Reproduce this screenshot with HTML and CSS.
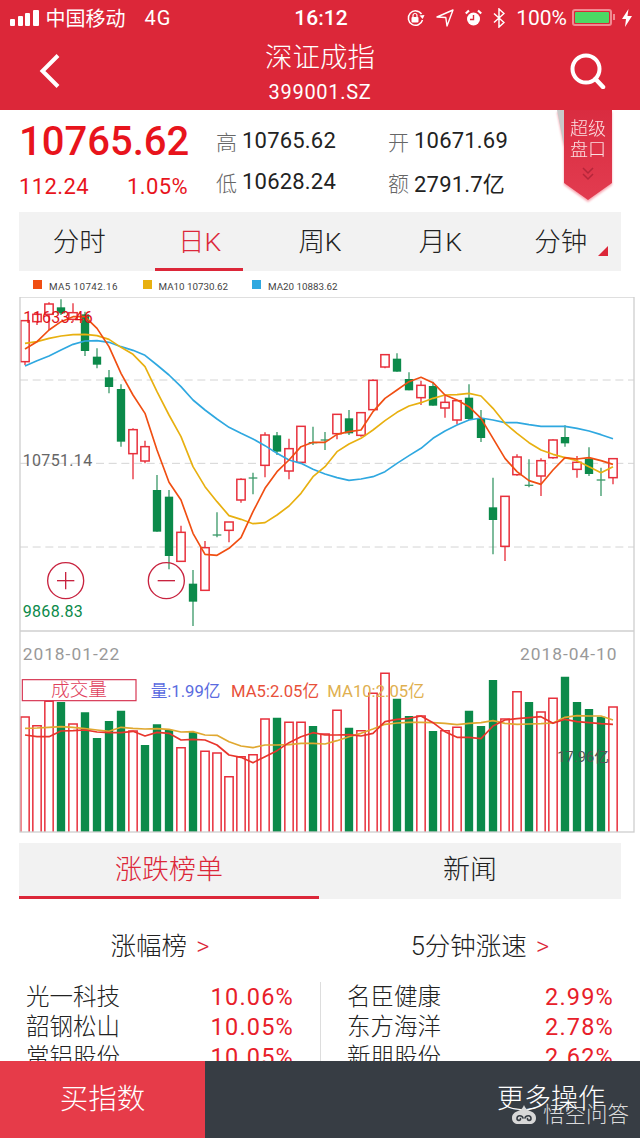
FILE: index.html
```html
<!DOCTYPE html>
<html lang="zh-CN">
<head>
<title>深证成指</title>
<meta charset="utf-8">
<link rel="stylesheet" href="styles.css">
</head>
<body>

<header class="top">
	<div class="status">
		<div class="status-left">
			<span class="signal"><i></i><i></i><i></i><i></i></span>
			<span class="carrier">中国移动</span>
			<span class="net">4G</span>
		</div>
		<div class="clock">16:12</div>
		<div class="status-right">
			<svg class="st-icon" width="19" height="18" viewBox="0 0 19 18"><path d="M15.500 5a7.200 7.200 0 1 0 1 6" fill="none" stroke="#fff" stroke-width="1.500"/><path d="M13.500 6.500l5-.5-1.800 4z" fill="#fff"/><rect x="5.500" y="8" width="7" height="5.500" rx="1" fill="#fff"/><path d="M7 8V6.500a2 2 0 0 1 4 0V8" fill="none" stroke="#fff" stroke-width="1.200"/></svg>
			<svg class="st-icon" width="18" height="18" viewBox="0 0 18 18"><path d="M1 8L17 1l-6 16-1.200-8.500z" fill="none" stroke="#fff" stroke-width="1.400" stroke-linejoin="round"/></svg>
			<svg class="st-icon" width="17" height="18" viewBox="0 0 17 18"><circle cx="8.500" cy="10" r="6.500" fill="#fff"/><path d="M8.500 6v4.500H5" fill="none" stroke="#dc2739" stroke-width="1.400"/><path d="M.8 4.500L4 1.500M16.200 4.500L13 1.500" stroke="#fff" stroke-width="2.200"/></svg>
			<svg class="st-icon" width="12" height="20" viewBox="0 0 12 20"><path d="M1 5.500l10 9-5 4.500V1l5 4.500-10 9" fill="none" stroke="#fff" stroke-width="1.500"/></svg>
			<span class="pct">100%</span>
			<span class="battery"><b></b></span>
			<svg class="bolt" width="10" height="18" viewBox="0 0 10 18"><path d="M6.500 0L0 10h4l-1 8 7-11H5.500z" fill="#fff"/></svg>
		</div>
	</div>
	<nav class="nav">
		<svg width="22" height="36" viewBox="0 0 22 36"><path d="M19 2.500L3.500 18 19 33.500" fill="none" stroke="#fff" stroke-width="4"/></svg>
		<div class="title">
			<div class="title-name">深证成指</div>
			<div class="title-code">399001.SZ</div>
		</div>
		<svg class="nav-search" width="36" height="36" viewBox="0 0 36 36"><circle cx="16" cy="16" r="13.500" fill="none" stroke="#fff" stroke-width="4"/><path d="M25.500 26l7.500 8" stroke="#fff" stroke-width="4.500" stroke-linecap="round"/></svg>
	</nav>
</header>

<section class="quote">
	<div class="price">
		<div class="price-now">10765.62</div>
		<div class="price-change"><span>112.24</span><span>1.05%</span></div>
	</div>
	<div class="stats">
		<div class="stat"><span class="stat-key">高</span>10765.62</div>
		<div class="stat"><span class="stat-key">开</span>10671.69</div>
		<div class="stat"><span class="stat-key">低</span>10628.24</div>
		<div class="stat"><span class="stat-key">额</span>2791.7亿</div>
	</div>
	<div class="badge-wrap">
		<div class="badge">
			<div class="badge-text">超级<br>盘口</div>
			<svg width="14" height="14" viewBox="0 0 14 14"><path d="M2 1l5 5 5-5M2 7l5 5 5-5" fill="none" stroke="#b5263a" stroke-width="1.500"/></svg>
		</div>
	</div>
</section>

<ul class="periods">
	<li>分时</li>
	<li class="on">日K</li>
	<li>周K</li>
	<li>月K</li>
	<li class="has-menu">分钟</li>
</ul>

<div class="legend">
	<span class="legend-item"><i class="sw-ma5"></i><span class="legend-short">MA5 10742.16</span></span>
	<span class="legend-item"><i class="sw-ma10"></i>MA10 10730.62</span>
	<span class="legend-item"><i class="sw-ma20"></i>MA20 10883.62</span>
</div>

<svg id="chart" class="chart" viewBox="0 81 1920 1629"></svg>

<ul class="tabs">
	<li class="on">涨跌榜单</li>
	<li>新闻</li>
</ul>

<main class="boards">
	<section class="board">
		<h3>涨幅榜 <span>&gt;</span></h3>
		<div class="row"><span>光一科技</span><em>10.06%</em></div>
		<div class="row"><span>韶钢松山</span><em>10.05%</em></div>
		<div class="row"><span>常铝股份</span><em>10.05%</em></div>
	</section>
	<section class="board">
		<h3>5分钟涨速 <span>&gt;</span></h3>
		<div class="row"><span>名臣健康</span><em>2.99%</em></div>
		<div class="row"><span>东方海洋</span><em>2.78%</em></div>
		<div class="row"><span>新朋股份</span><em>2.62%</em></div>
	</section>
</main>

<footer class="bottom">
	<div class="buy">买指数</div>
	<div class="more">更多操作</div>
</footer>

<div class="mark">
	<svg width="26" height="22" viewBox="0 0 26 22"><path d="M13 1c1 3 3 5 6 6 3 1 6 3 6 7 0 4-3 6-6 6H7c-3 0-6-2-6-6 0-4 3-6 6-7 3-1 5-3 6-6z" fill="#d8d8d8"/><path d="M12 14c-1-3-6-3-6 .5 0 2.500 4 2.500 3.500 0M14 14c1-3 6-3 6 .5 0 2.500-4 2.500-3.500 0" fill="none" stroke="#373d44" stroke-width="1.600" stroke-linecap="round"/></svg>
	<span>悟空问答</span>
</div>

<script src="chart.js"></script>
</body>
</html>
```

FILE: styles.css
```css
html, body {
	margin: 0;
	padding: 0;
}

body {
	position: relative;
	display: flex;
	flex-direction: column;
	width: 640px;
	height: 1138px;
	overflow: hidden;
	background: #fff;
	color: #222;
	font-family: Roboto, "Noto Sans CJK SC", sans-serif;
}

ul, li {
	margin: 0;
	padding: 0;
	list-style-type: none;
}

/* red top bar */
.top {
	flex: none;
	height: 110px;
	background: #dc2739;
	color: #fff;
}

.status {
	display: flex;
	align-items: center;
	justify-content: space-between;
	height: 35px;
	padding: 0 8px 0 10px;
	font-size: 20px;
}

.status-left, .status-right {
	display: flex;
	align-items: center;
	width: 226px;
}

.status-right {
	justify-content: flex-end;
}

.signal {
	display: flex;
	align-items: flex-end;
	gap: 2.500px;
	height: 16px;
	margin-right: 7px;
}

.signal i {
	width: 5px;
	background: #fff;
	border-radius: 1px;
}

.signal i:nth-child(1) { height: 7px; }
.signal i:nth-child(2) { height: 10px; }
.signal i:nth-child(3) { height: 13px; }
.signal i:nth-child(4) { height: 16px; width: 6px; }

.carrier {
	margin-right: 19px;
}

.net {
	font-size: 20px;
	letter-spacing: 1px;
}

.clock {
	font-weight: 500;
	font-size: 21px;
}

.st-icon {
	margin-right: 11px;
}

.pct {
	margin-right: 5px;
	font-size: 21px;
}

.battery {
	position: relative;
	display: block;
	box-sizing: border-box;
	width: 40px;
	height: 17px;
	padding: 1px;
	border: 2px solid #f08a92;
	border-radius: 3px;
	margin-right: 10px;
}

.battery b {
	display: block;
	height: 100%;
	background: #4cd964;
	border-radius: 1px;
}

.battery:after {
	content: '';
	position: absolute;
	top: 3px;
	right: -5px;
	width: 2px;
	height: 6px;
	background: #f08a92;
}

.nav {
	position: relative;
	display: flex;
	align-items: center;
	justify-content: center;
	height: 75px;
}

.nav svg {
	position: absolute;
	top: 18px;
	left: 39px;
}

.nav svg.nav-search {
	left: 570px;
}

.title {
	text-align: center;
}

.title-name {
	font-size: 27.500px;
	font-weight: 300;
	line-height: 40px;
	margin-top: -1px;
}

.title-code {
	font-size: 20px;
	line-height: 28px;
	letter-spacing: 0.7px;
}

/* price block */
.quote {
	flex: none;
	display: flex;
	height: 102px;
}

.price {
	width: 197px;
	margin-left: 19px;
	color: #e8141c;
}

.price-now {
	font-size: 40px;
	font-weight: 500;
	line-height: 63px;
}

.price-change {
	display: flex;
	justify-content: space-between;
	width: 169px;
	font-size: 22px;
	line-height: 27px;
	letter-spacing: 0.4px;
}

.stats {
	display: grid;
	grid-template-columns: 172px 170px;
	grid-auto-rows: 41px;
	width: 342px;
	padding-top: 10px;
}

.stat {
	display: flex;
	align-items: center;
	font-size: 22px;
	letter-spacing: 0.2px;
	color: #222;
}

.stat-key {
	width: 26px;
	font-size: 21px;
	font-weight: 300;
	color: #666;
}

.badge-wrap {
	position: relative;
	width: 48px;
	margin-left: 6px;
	filter: drop-shadow(0 2px 1px #f7a6b0);
}

.badge-wrap:before {
	content: '';
	position: absolute;
	top: 0;
	left: -7px;
	border-top: 36px solid #c9c9c9;
	border-left: 7px solid transparent;
}

.badge {
	display: flex;
	flex-direction: column;
	align-items: center;
	width: 48px;
	height: 90px;
	background: linear-gradient(#d92c40, #e23c50);
	clip-path: polygon(0 0, 100% 0, 100% 81%, 50% 100%, 0 81%);
	color: #fbe0e2;
}

.badge-text {
	font-size: 18px;
	font-weight: 300;
	line-height: 21px;
	margin-top: 8px;
	margin-bottom: 7px;
}

/* period tabs */
.periods {
	flex: none;
	display: grid;
	grid-template-columns: repeat(5, 1fr);
	width: 602px;
	height: 59px;
	margin-left: 19px;
	background: #f2f2f2;
}

.periods li {
	position: relative;
	font-size: 26.500px;
	font-weight: 300;
	line-height: 59px;
	text-align: center;
	color: #222;
}

.periods li.on {
	color: #dc2739;
}

.periods li.on:after {
	content: '';
	position: absolute;
	left: 16px;
	right: 17px;
	bottom: 0;
	height: 3px;
	background: #dc2739;
}

.periods li.has-menu:after {
	content: '';
	position: absolute;
	right: 13px;
	bottom: 15px;
	border-bottom: 10px solid #dc2739;
	border-left: 10px solid transparent;
}

/* chart */
.legend {
	flex: none;
	display: flex;
	height: 26px;
	padding-left: 33px;
	font-size: 9.800px;
	color: #444;
}

.legend-item {
	display: flex;
	align-items: center;
	width: 109.500px;
	height: 31px;
}

.legend-short {
	letter-spacing: 0.4px;
}

.legend-item i {
	width: 9px;
	height: 9px;
	margin-right: 7px;
	margin-top: -4px;
}

.sw-ma5 { background: #f04e12; }
.sw-ma10 { background: #e8b010; }
.sw-ma20 { background: #2fa8e0; }

.chart {
	flex: none;
	display: block;
	width: 640px;
	height: 543px;
}

.frame { fill: none; stroke: #cfcfcf; stroke-width: 4; }
.dash { stroke: #d4d4d4; stroke-width: 3; stroke-dasharray: 24 14; }
.up-body { fill: #fff; stroke: #e8303c; stroke-width: 4.500; }
.up-wick { stroke: #e8303c; stroke-width: 4; }
.down-body { fill: #0b8a4a; }
.down-wick { stroke: #3d9a6a; stroke-width: 4; }
.line { fill: none; stroke-width: 5; stroke-linejoin: round; }
.vol { fill: none; stroke-width: 5; stroke-linejoin: round; }
.ma5 { stroke: #f04e12; }
.ma10 { stroke: #e8b010; }
.ma20 { stroke: #2fa8e0; }
.vma5 { stroke: #e8352c; }
.vma10 { stroke: #e0a830; }
.btn { fill: none; stroke: #c8233f; stroke-width: 4; }
.label { font-size: 48px; letter-spacing: 1px; }
.hi { fill: #e0141c; }
.mid { fill: #666; }
.lo { fill: #0b8a4a; }
.date { font-size: 52px; fill: #999; letter-spacing: 3px; }
.vol-box { fill: #fff; stroke: #d63350; stroke-width: 3.500; }
.vol-title { font-size: 56px; font-weight: 300; fill: #e0405c; text-anchor: middle; }
.vol-text { font-size: 50px; }
.t-vol { fill: #5a6be0; }
.t-ma5 { fill: #e8503a; }
.t-ma10 { fill: #e0b050; }
.t-last { fill: #555; font-size: 44px; }

/* lower tabs */
.tabs {
	flex: none;
	display: grid;
	grid-template-columns: 300px 302px;
	width: 602px;
	height: 56px;
	margin-left: 19px;
	margin-top: 3px;
	background: #f2f2f2;
}

.tabs li {
	font-size: 27px;
	font-weight: 300;
	line-height: 55px;
	text-align: center;
	color: #222;
}

.tabs li.on {
	box-sizing: border-box;
	height: 56px;
	color: #dc2739;
	border-bottom: 3px solid #dc2739;
}

.boards {
	flex: 1;
	display: grid;
	grid-template-columns: 320px 320px;
	overflow: hidden;
}

.board h3 {
	margin: 0 0 18px;
	padding-top: 29px;
	font-weight: 300;
	font-size: 25.500px;
	line-height: 36px;
	text-align: center;
	color: #222;
}

.board h3 span {
	color: #dc2739;
	margin-left: 3px;
}

.row {
	display: flex;
	justify-content: space-between;
	height: 30px;
	padding: 0 26px;
	font-size: 23.500px;
	font-weight: 300;
	line-height: 30px;
	color: #222;
}

.board + .board .row {
	padding-right: 26px;
	border-left: 1px solid #ddd;
}

.row em {
	font-style: normal;
	font-weight: 400;
	color: #e8202a;
	letter-spacing: 1.200px;
}

/* bottom buttons */
.bottom {
	flex: none;
	display: flex;
	height: 77px;
	font-size: 28.500px;
	font-weight: 300;
	line-height: 77px;
	color: #fff;
}

.buy {
	width: 205px;
	text-align: center;
	background: #e63b49;
}

.more {
	flex: 1;
	padding-right: 35px;
	text-align: right;
	background: #373d44;
	font-size: 27px;
}

/* watermark over the corner */
.mark {
	position: absolute;
	right: 11px;
	bottom: 10px;
	display: flex;
	align-items: center;
	gap: 6px;
	font-size: 21.500px;
	font-weight: 300;
	line-height: 26px;
	color: rgba(235, 235, 235, 0.92);
}
```

FILE: chart.js
```js
// all chart numbers are in viewBox units, three per screen pixel
var NS = 'http://www.w3.org/2000/svg';
var svg = document.getElementById('chart');

// [up?, high, top, bottom, low], a doji has top == bottom
var candles = [
	[1, 152, 152, 275, 285], [1, 125, 133, 155, 165], [1, 97, 102, 133, 180], [0, 88, 112, 130, 135],
	[1, 100, 128, 148, 155], [0, 125, 133, 243, 258], [0, 235, 260, 284, 295], [0, 300, 322, 351, 370],
	[0, 343, 357, 515, 530], [1, 475, 479, 551, 628], [1, 512, 530, 573, 580], [0, 615, 660, 785, 785],
	[0, 660, 680, 858, 898], [1, 767, 787, 874, 874], [0, 900, 941, 995, 1068], [1, 813, 833, 961, 961],
	[0, 727, 795, 795, 802], [1, 756, 756, 781, 817], [1, 625, 628, 690, 698], [0, 608, 624, 624, 673],
	[1, 487, 495, 586, 622], [0, 486, 496, 545, 555], [1, 506, 536, 603, 628], [1, 469, 469, 577, 577],
	[0, 470, 518, 518, 525], [0, 486, 510, 510, 540], [1, 433, 433, 491, 508], [0, 420, 445, 490, 495],
	[1, 428, 428, 496, 500], [1, 328, 331, 419, 419], [1, 254, 254, 291, 295], [0, 250, 266, 305, 305],
	[0, 307, 327, 361, 361], [1, 332, 346, 383, 405], [0, 335, 348, 407, 407], [1, 378, 397, 414, 443],
	[1, 392, 392, 450, 463], [0, 343, 383, 447, 450], [0, 420, 445, 504, 516], [0, 623, 712, 750, 853],
	[1, 679, 679, 829, 873], [1, 553, 561, 614, 617], [0, 568, 646, 646, 652], [1, 565, 572, 618, 678],
	[1, 508, 510, 563, 566], [0, 466, 501, 520, 530], [1, 558, 577, 598, 623], [0, 532, 566, 612, 618],
	[0, 593, 630, 630, 678], [1, 566, 566, 623, 643]
];

var ma5 = [237, 215, 180, 155, 140, 140, 175, 230, 310, 375, 430, 540, 637, 690, 790, 853, 856, 835, 803, 725, 655, 605, 570, 530, 517, 517,
	493, 485, 480, 425, 385, 360, 335, 322, 338, 375, 390, 410, 445, 505, 565, 605, 632, 643, 600, 563, 567, 563, 572, 583];
var ma10 = [220, 215, 205, 198, 194, 193, 197, 208, 232, 253, 290, 365, 435, 500, 590, 650, 695, 737, 748, 761, 758, 735, 708, 670, 620, 590,
	545, 522, 505, 480, 452, 427, 408, 398, 385, 375, 374, 370, 378, 415, 460, 490, 518, 540, 553, 563, 572, 590, 608, 590];
var ma20 = [288, 272, 258, 240, 223, 213, 212, 217, 230, 241, 256, 285, 315, 350, 390, 420, 447, 472, 490, 507, 527, 550, 570, 580, 598, 612,
	623, 631, 627, 620, 605, 580, 557, 535, 505, 483, 465, 450, 444, 450, 458, 458, 464, 469, 469, 469, 475, 483, 494, 506];

// volume bars: [up?, top]
var bars = [
	[1, 261], [1, 287], [1, 214], [0, 216], [1, 282], [0, 247], [0, 324], [0, 273], [0, 242], [1, 303],
	[0, 345], [0, 283], [0, 300], [1, 353], [0, 306], [1, 364], [1, 369], [1, 440], [1, 380], [1, 374],
	[1, 267], [0, 263], [1, 277], [1, 277], [0, 288], [1, 312], [1, 241], [0, 293], [1, 302], [1, 190],
	[1, 130], [0, 206], [0, 258], [1, 258], [0, 303], [1, 302], [1, 292], [0, 242], [0, 288], [0, 150],
	[1, 267], [1, 185], [0, 216], [1, 246], [1, 205], [0, 140], [0, 216], [0, 237], [0, 260], [1, 231]
];

var vma5 = [315, 320, 320, 303, 302, 300, 306, 308, 308, 304, 318, 307, 310, 330, 328, 330, 345, 375, 382, 398, 380, 362, 338, 320, 308, 315,
	315, 314, 318, 310, 275, 268, 265, 258, 278, 305, 322, 322, 326, 288, 270, 266, 263, 260, 280, 268, 275, 278, 281, 283];
var vma10 = [295, 294, 292, 290, 292, 296, 300, 304, 292, 295, 297, 296, 298, 306, 305, 315, 316, 335, 348, 353, 345, 345, 344, 340, 340, 342,
	332, 320, 310, 297, 283, 279, 277, 277, 278, 280, 284, 280, 278, 272, 280, 283, 282, 281, 279, 262, 257, 258, 258, 270];

function el(tag, attrs, text) {
	var node = document.createElementNS(NS, tag);
	for (var key in attrs) {
		node.setAttribute(key, attrs[key]);
	}
	if (text) node.textContent = text;
	svg.appendChild(node);
	return node;
}

function xOf(i) {
	return 75 + i * 36;
}

function polyline(values, offset, cls) {
	var pts = [];
	for (var i = 0; i < values.length; i += 1) {
		pts.push(xOf(i) + ',' + (values[i] + offset));
	}
	el('polyline', { points: pts.join(' '), 'class': cls });
}

var VOL = 1080; // volume panel starts this far below the candle panel
var BOTTOM = VOL + 606;
var i = 0;

el('line', { x1: 60, x2: 1902, y1: 330, y2: 330, 'class': 'dash' });
el('line', { x1: 60, x2: 1902, y1: 580, y2: 580, 'class': 'dash' });
el('line', { x1: 60, x2: 1902, y1: 831, y2: 831, 'class': 'dash' });

for (i = 0; i < candles.length; i += 1) {
	var c = candles[i];
	var x = xOf(i);
	var kind = c[0] ? 'up' : 'down';

	el('line', { x1: x, x2: x, y1: c[1], y2: c[4], 'class': kind + '-wick' });
	if (c[2] === c[3]) {
		el('line', { x1: x - 13, x2: x + 13, y1: c[2], y2: c[2], 'class': kind + '-wick' });
	}
	else {
		el('rect', { x: x - 12.500, y: c[2], width: 25, height: c[3] - c[2], 'class': kind + '-body' });
	}
}

polyline(ma20, 0, 'line ma20');
polyline(ma10, 0, 'line ma10');
polyline(ma5, 0, 'line ma5');

el('text', { x: 70, y: 160, 'class': 'label hi' }, '11633.46');
el('text', { x: 68, y: 588, 'class': 'label mid' }, '10751.14');
el('text', { x: 68, y: 1040, 'class': 'label lo' }, '9868.83');

el('circle', { cx: 197, cy: 932, r: 54, 'class': 'btn' });
el('line', { x1: 171, x2: 223, y1: 932, y2: 932, 'class': 'btn' });
el('line', { x1: 197, x2: 197, y1: 906, y2: 958, 'class': 'btn' });
el('circle', { cx: 499, cy: 932, r: 54, 'class': 'btn' });
el('line', { x1: 473, x2: 525, y1: 932, y2: 932, 'class': 'btn' });

for (i = 0; i < bars.length; i += 1) {
	var b = bars[i];
	var left = xOf(i) - 12.500;
	// the bars stand on the frame, so they have no bottom edge
	el('path', { d: 'M' + left + ' ' + BOTTOM + 'V' + (b[1] + VOL) + 'h25V' + BOTTOM, 'class': b[0] ? 'up-body' : 'down-body' });
}

polyline(vma10, VOL, 'vol vma10');
polyline(vma5, VOL, 'vol vma5');

el('rect', { x: 60, y: 81, width: 1842, height: BOTTOM - 81, 'class': 'frame' });
el('line', { x1: 60, x2: 1902, y1: 1083, y2: 1083, 'class': 'frame' });

el('text', { x: 68, y: VOL + 90, 'class': 'date' }, '2018-01-22');
el('text', { x: 1560, y: VOL + 90, 'class': 'date' }, '2018-04-10');

el('rect', { x: 67, y: VOL + 149, width: 341, height: 63, 'class': 'vol-box' });
el('text', { x: 237, y: VOL + 198, 'class': 'vol-title' }, '成交量');
el('text', { x: 452, y: VOL + 202, 'class': 'vol-text t-vol' }, '量:1.99亿');
el('text', { x: 693, y: VOL + 202, 'class': 'vol-text t-ma5' }, 'MA5:2.05亿');
el('text', { x: 982, y: VOL + 202, 'class': 'vol-text t-ma10' }, 'MA10:2.05亿');
el('text', { x: 1672, y: VOL + 396, 'class': 't-last' }, '17.96亿');
```
